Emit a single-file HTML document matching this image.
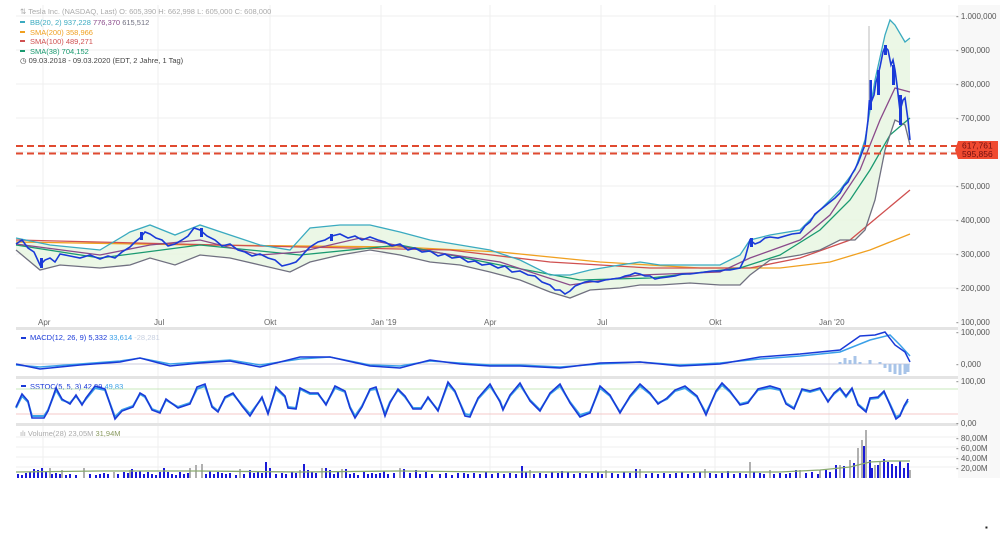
<!DOCTYPE html>
<html><head><meta charset="utf-8"><style>
html,body{margin:0;padding:0;background:#fff;width:1000px;height:535px;overflow:hidden}
svg{display:block;font-family:"Liberation Sans",sans-serif}
</style></head><body>
<svg width="1000" height="535" viewBox="0 0 1000 535">
<rect x="0" y="0" width="1000" height="535" fill="#fff"/>
<rect x="958" y="5" width="42" height="473" fill="#f8f8f8"/>
<!-- main grid -->
<g stroke="#efefef" stroke-width="1">
<line x1="16" x2="958" y1="16" y2="16"/><line x1="16" x2="958" y1="50" y2="50"/><line x1="16" x2="958" y1="84" y2="84"/><line x1="16" x2="958" y1="118" y2="118"/><line x1="16" x2="958" y1="152" y2="152"/><line x1="16" x2="958" y1="186" y2="186"/><line x1="16" x2="958" y1="220" y2="220"/><line x1="16" x2="958" y1="254" y2="254"/><line x1="16" x2="958" y1="288" y2="288"/>
<line x1="16" x2="958" y1="437" y2="437"/><line x1="16" x2="958" y1="447" y2="447"/><line x1="16" x2="958" y1="457" y2="457"/><line x1="16" x2="958" y1="467" y2="467"/>
<line x1="43" x2="43" y1="5" y2="478"/><line x1="158" x2="158" y1="5" y2="478"/><line x1="270" x2="270" y1="5" y2="478"/><line x1="381" x2="381" y1="5" y2="478"/><line x1="490" x2="490" y1="5" y2="478"/><line x1="601" x2="601" y1="5" y2="478"/><line x1="715" x2="715" y1="5" y2="478"/><line x1="829" x2="829" y1="5" y2="478"/>
</g>
<!-- panel separators -->
<g fill="#e4e4e4">
<rect x="16" y="327" width="942" height="3"/><rect x="16" y="376" width="942" height="3"/><rect x="16" y="423" width="942" height="3"/>
</g>
<!-- BB fill -->
<polygon fill="#e6f5e0" opacity="0.8" points="16,238 50,245 100,250 130,232 150,225 175,235 200,225 230,235 260,245 290,250 310,228 340,225 370,225 400,232 430,240 460,245 490,250 520,260 550,275 570,275 590,270 620,265 640,262 660,265 690,265 720,265 740,255 750,240 770,235 800,230 820,210 840,190 855,170 865,140 875,80 885,35 890,20 895,25 905,42 910,38 910,145 905,125 895,120 885,150 875,200 865,230 855,240 840,240 820,250 800,255 770,260 750,275 740,285 720,285 690,283 660,285 640,285 620,288 590,290 570,298 550,292 520,280 490,272 460,265 430,262 400,255 370,250 340,255 310,262 290,272 260,265 230,258 200,255 175,265 150,258 130,265 100,268 60,265 40,270 16,250"/>
<g fill="none" stroke-width="1.3">
<polyline stroke="#f0a020" points="16,242 200,245 400,247 500,252 600,262 700,268 780,268 830,262 870,250 910,234"/>
<polyline stroke="#d05050" points="16,240 300,247 450,250 550,262 650,268 750,268 800,258 850,240 880,215 910,190"/>
<polyline stroke="#1a9a70" points="16,245 100,258 200,245 300,255 400,245 500,265 580,280 650,278 740,268 780,255 820,230 850,200 870,170 890,135 910,118"/>
<polyline stroke="#8a4a8a" points="16,244 100,255 150,245 200,240 260,255 300,252 360,238 420,250 500,262 570,285 640,275 720,272 750,258 800,240 830,215 860,170 880,120 895,88 910,92"/>
<polyline stroke="#3aaac0" points="16,238 50,245 100,250 130,232 150,225 175,235 200,225 230,235 260,245 290,250 310,228 340,225 370,225 400,232 430,240 460,245 490,250 520,260 550,275 570,275 590,270 620,265 640,262 660,265 690,265 720,265 740,255 750,240 770,235 800,230 820,210 840,190 855,170 865,140 875,80 885,35 890,20 895,25 905,42 910,38"/>
<polyline stroke="#707080" points="16,250 40,270 60,265 100,268 130,265 150,258 175,265 200,255 230,258 260,265 290,272 310,262 340,255 370,250 400,255 430,262 460,265 490,272 520,280 550,292 570,298 590,290 620,288 640,285 660,285 690,283 720,285 740,285 750,275 770,260 800,255 820,250 840,240 855,240 865,230 875,200 885,150 895,120 905,125 910,145"/>
<polyline stroke="#1a3ad8" stroke-width="1.6" points="16,244 22,240 28,248 34,252 40,265 45,260 50,258 55,262 60,254 70,256 80,258 90,255 100,259 108,256 115,258 122,252 130,247 135,242 140,238 145,232 150,234 156,238 162,240 168,246 175,244 182,240 188,236 194,228 200,230 207,236 215,240 222,246 230,244 238,250 245,252 252,256 260,254 268,258 275,260 282,266 290,264 296,262 300,258 305,252 310,247 318,242 325,240 332,236 340,234 348,238 355,236 362,240 370,237 378,240 385,242 392,246 400,244 408,250 415,248 422,252 430,251 438,256 445,254 452,258 460,257 468,262 475,261 482,265 490,264 498,268 505,266 512,272 520,271 528,275 535,276 542,282 550,285 555,290 560,290 565,294 570,291 575,286 580,284 585,282 590,281 598,282 605,280 612,279 620,278 625,276 630,275 635,273 640,274 645,276 650,276 655,279 660,278 668,277 675,276 682,274 690,274 698,273 705,272 712,271 720,271 725,270 730,270 735,269 740,268 745,258 750,240 755,244 760,242 765,238 770,237 778,238 785,236 792,234 800,233 805,226 810,222 815,214 820,210 825,206 830,202 835,198 840,193 844,186 848,182 852,174 855,169 858,163 860,158 863,150 865,145 868,120 870,91 872,100 874,95 876,82 878,75 880,67 883,52 885,47 888,50 891,65 893,60 895,70 897,85 900,111 903,100 905,98 908,120 910,140"/>
</g>
<!-- some candle bodies -->
<g fill="#1a3ad8">
<rect x="40" y="258" width="3" height="10"/><rect x="140" y="232" width="3" height="8"/><rect x="200" y="228" width="3" height="9"/><rect x="330" y="234" width="3" height="7"/><rect x="750" y="238" width="3" height="9"/><rect x="869" y="80" width="3" height="30"/><rect x="877" y="70" width="3" height="25"/><rect x="884" y="45" width="3" height="10"/><rect x="892" y="65" width="3" height="20"/><rect x="899" y="95" width="3" height="30"/>
</g>
<line x1="869" x2="869" y1="26" y2="100" stroke="#bbb" stroke-width="1"/>
<!-- dashed lines -->
<g stroke="#e04a30" stroke-width="2" stroke-dasharray="7,4">
<line x1="16" x2="958" y1="146" y2="146"/><line x1="16" x2="958" y1="153.5" y2="153.5"/>
</g>
<polygon points="958,141 998,141 998,159 958,159 955,150" fill="#f04a30"/>
<text x="962" y="148.5" font-size="8.5" fill="#701010">617,761</text>
<text x="962" y="157" font-size="8.5" fill="#701010">595,856</text>
<!-- right axis labels -->
<g font-size="8" fill="#555">
<text x="956" y="19">- 1.000,000</text><text x="956" y="53">- 900,000</text><text x="956" y="87">- 800,000</text><text x="956" y="121">- 700,000</text><text x="956" y="189">- 500,000</text><text x="956" y="223">- 400,000</text><text x="956" y="257">- 300,000</text><text x="956" y="291">- 200,000</text><text x="956" y="325">- 100,000</text>
<text x="956" y="335">- 100,000</text><text x="956" y="367">- 0,000</text>
<text x="956" y="384">- 100,00</text><text x="956" y="426">- 0,00</text>
<text x="956" y="441">- 80,00M</text><text x="956" y="451">- 60,00M</text><text x="956" y="461">- 40,00M</text><text x="956" y="471">- 20,00M</text>
</g>
<g font-size="8" fill="#666">
<text x="38" y="325">Apr</text><text x="154" y="325">Jul</text><text x="264" y="325">Okt</text><text x="371" y="325">Jan '19</text><text x="484" y="325">Apr</text><text x="597" y="325">Jul</text><text x="709" y="325">Okt</text><text x="819" y="325">Jan '20</text>
</g>
<!-- legend -->
<g font-size="7.5">
<text x="20" y="14" fill="#aaa">⇅ Tesla Inc. (NASDAQ, Last)  O: 605,390  H: 662,998  L: 605,000  C: 608,000</text>
<rect x="20" y="21" width="5" height="2" fill="#3aaac0"/><text x="30" y="25" fill="#3aaac0">BB(20, 2)  937,228  <tspan fill="#8a4a8a">776,370</tspan>  <tspan fill="#707080">615,512</tspan></text>
<rect x="20" y="31" width="5" height="2" fill="#f0a020"/><text x="30" y="35" fill="#f0a020">SMA(200)  358,966</text>
<rect x="20" y="40" width="5" height="2" fill="#d05050"/><text x="30" y="44" fill="#d05050">SMA(100)  489,271</text>
<rect x="20" y="50" width="5" height="2" fill="#1a9a70"/><text x="30" y="54" fill="#1a9a70">SMA(38)  704,152</text>
<text x="20" y="63" fill="#444">◷ 09.03.2018 - 09.03.2020   (EDT, 2 Jahre, 1 Tag)</text>
<rect x="21" y="337" width="5" height="2" fill="#1a3ad8"/><text x="30" y="340" fill="#1a3ad8">MACD(12, 26, 9)  5,332  <tspan fill="#3aa0e8">33,614</tspan>  <tspan fill="#c8d0e0">-28,281</tspan></text>
<rect x="21" y="385" width="5" height="2" fill="#1a3ad8"/><text x="30" y="389" fill="#1a3ad8">SSTOC(5, 5, 3)  42,39  <tspan fill="#3aa0e8">49,83</tspan></text>
<text x="20" y="436" fill="#aaa">ılı Volume(28)  23,05M  <tspan fill="#8a9a60">31,94M</tspan></text>
</g>
<!-- MACD -->
<line x1="16" x2="910" y1="364" y2="364" stroke="#ccd" stroke-width="1"/>
<path d="M840,364V362M845,364V358M850,364V360M855,364V356M860,364V362M870,364V360M880,364V362M885,364V368M890,364V372M895,364V374M900,364V375M905,364V374M908,364V372" stroke="#a8c4e8" stroke-width="3"/>
<polyline fill="none" stroke="#3aa0e8" stroke-width="1.5" points="16,365 40,367 80,364 120,361 140,358 170,364 200,362 230,360 260,365 300,359 330,357 370,365 400,366 430,361 460,363 490,365 520,365 560,367 600,364 640,362 680,365 720,363 760,359 800,356 840,352 870,340 890,335 900,345 910,356"/>
<polyline fill="none" stroke="#1a3ad8" stroke-width="1.5" points="16,364 40,369 80,365 120,362 140,358 170,366 200,363 230,361 260,367 300,357 330,357 370,366 400,368 430,360 460,364 490,366 520,366 560,368 600,363 640,362 680,366 720,364 760,357 800,354 840,350 860,336 875,335 885,332 895,345 905,352 910,362"/>
<!-- SSTOC -->
<line x1="16" x2="958" y1="389" y2="389" stroke="#b8e0a8" stroke-width="0.8"/>
<line x1="16" x2="958" y1="414" y2="414" stroke="#f0b8b8" stroke-width="0.8"/>
<polyline fill="none" stroke="#3aa0e8" stroke-width="2" points="16,408 22,396 28,402 32,416 44,416 48,410 56,390 62,400 70,403 76,396 82,404 86,399 95,388 105,390 115,417 122,410 133,406 140,394 145,397 152,409 160,412 166,400 178,407 190,403 197,389 205,386 212,406 218,411 225,398 233,394 242,405 250,414 262,398 268,413 276,389 285,397 288,407 296,408 300,389 310,394 318,394 326,404 335,388 345,392 350,407 355,416 362,406 370,390 376,389 385,414 390,402 398,390 405,397 413,408 421,408 428,398 438,410 448,384 455,392 465,414 470,415 478,399 490,386 500,401 503,409 510,396 520,385 530,400 540,410 550,394 560,386 570,402 580,415 590,412 600,388 610,396 620,412 630,397 640,386 650,394 658,403 667,399 675,391 685,388 697,397 706,413 716,392 722,385 730,392 740,404 748,402 758,390 770,388 780,390 786,403 794,408 802,390 810,392 820,389 828,401 834,394 840,389 846,397 852,389 858,404 866,411 870,399 878,398 884,392 890,404 896,417 900,415 904,407 908,401"/>
<polyline fill="none" stroke="#1a3ad8" stroke-width="1.6" points="16,407 22,394 28,401 32,418 44,418 48,411 56,388 62,399 70,404 76,395 82,405 86,398 95,386 105,389 115,419 122,411 133,407 140,393 145,396 152,410 160,413 166,399 178,408 190,404 197,387 205,384 212,407 218,412 225,397 233,393 242,406 250,416 262,397 268,414 276,387 285,396 288,408 296,409 300,388 310,393 318,393 326,405 335,386 345,391 350,408 355,418 362,407 370,389 376,387 385,416 390,403 398,389 405,396 413,409 421,409 428,397 438,411 448,382 455,391 465,416 470,417 478,398 490,384 500,402 503,410 510,395 520,383 530,401 540,411 550,393 560,384 570,403 580,417 590,413 600,386 610,395 620,413 630,396 640,384 650,393 658,404 667,398 675,390 685,386 697,396 706,415 716,391 722,383 730,391 740,405 748,403 758,389 770,386 780,389 786,404 794,409 802,389 810,391 820,388 828,402 834,393 840,388 846,396 852,388 858,405 866,412 870,398 878,397 884,391 890,405 896,419 900,416 904,406 908,399"/>
<!-- Volume -->
<path stroke="#b0b0b0" stroke-width="2" fill="none" d="M50,478V468M62,478V470M84,478V468M114,478V472M130,478V470M190,478V468M196,478V465M202,478V464M240,478V469M300,478V470M322,478V468M342,478V469M400,478V468M530,478V470M606,478V470M640,478V469M705,478V469M750,478V462M770,478V470M800,478V470M820,478V470M840,478V465M850,478V460M858,478V448M862,478V440M866,478V430M875,478V465M880,478V462M900,478V464M910,478V470"/>
<path stroke="#1a1ad8" stroke-width="2" fill="none" d="M18,478V474M22,478V475M26,478V473M30,478V472M34,478V469M38,478V470M42,478V468M46,478V472M52,478V474M56,478V473M60,478V474M66,478V475M70,478V474M76,478V475M90,478V474M96,478V475M100,478V474M104,478V473M108,478V474M118,478V474M124,478V472M128,478V473M132,478V469M136,478V472M140,478V471M144,478V474M148,478V472M152,478V474M156,478V475M160,478V472M164,478V468M168,478V472M172,478V474M176,478V475M180,478V472M184,478V474M188,478V473M206,478V474M210,478V471M214,478V474M218,478V472M222,478V473M226,478V474M230,478V473M236,478V475M244,478V474M250,478V470M254,478V473M258,478V472M262,478V473M266,478V462M270,478V468M276,478V474M282,478V473M286,478V474M292,478V472M296,478V473M304,478V464M308,478V470M312,478V472M316,478V473M326,478V468M330,478V470M334,478V474M338,478V471M346,478V469M350,478V474M354,478V473M358,478V475M364,478V472M368,478V474M372,478V473M376,478V474M380,478V473M384,478V471M388,478V474M394,478V473M404,478V469M410,478V473M416,478V470M420,478V474M426,478V472M432,478V474M440,478V474M446,478V473M452,478V475M458,478V473M464,478V473M468,478V474M474,478V473M480,478V474M486,478V472M492,478V474M498,478V473M504,478V474M510,478V473M516,478V474M522,478V466M526,478V472M534,478V474M540,478V473M546,478V474M552,478V472M558,478V473M562,478V471M568,478V472M574,478V474M580,478V473M586,478V474M592,478V473M598,478V472M602,478V474M612,478V473M618,478V474M624,478V472M630,478V473M636,478V469M646,478V474M652,478V473M658,478V474M664,478V473M670,478V474M676,478V473M682,478V472M688,478V474M694,478V473M700,478V472M710,478V473M716,478V474M722,478V473M728,478V471M734,478V474M740,478V473M746,478V474M754,478V472M760,478V473M764,478V474M774,478V474M780,478V473M786,478V474M790,478V473M796,478V470M806,478V473M812,478V472M818,478V474M826,478V470M830,478V472M836,478V465M844,478V466M854,478V463M864,478V446M870,478V460M872,478V468M878,478V465M884,478V459M888,478V462M892,478V464M896,478V466M900,478V461M904,478V468M908,478V463"/>
<polyline fill="none" stroke="#8aaa70" stroke-width="1.3" points="16,472 100,471 200,471 300,472 400,471 500,472 600,472 700,472 780,472 820,470 850,467 870,462 890,461 910,461"/>
<text x="985" y="530" font-size="8" fill="#222">▪</text>
</svg>
</body></html>
